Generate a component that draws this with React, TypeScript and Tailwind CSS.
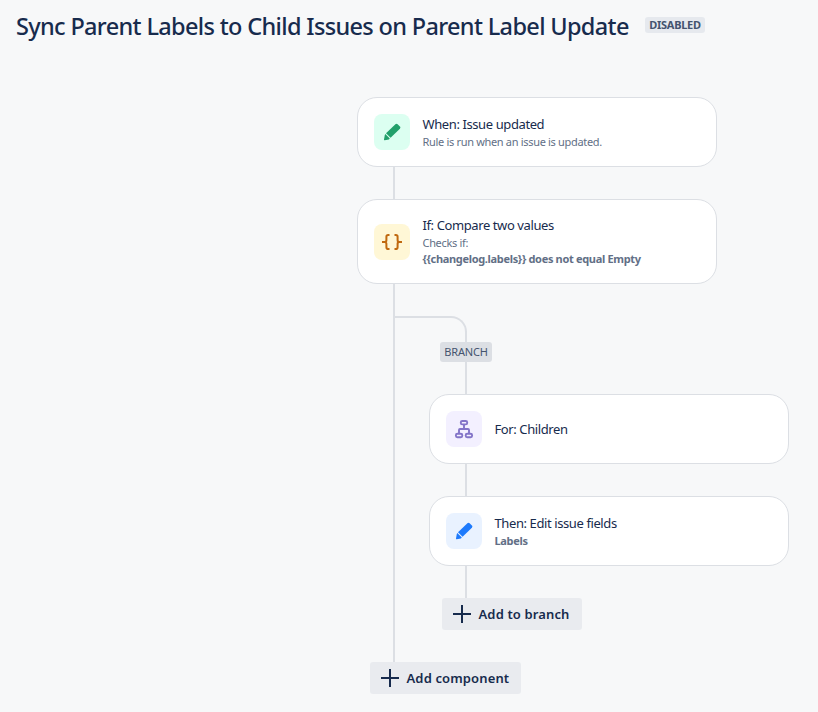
import type { ReactNode } from 'react';

const PencilIcon = () => (
  <svg width="24" height="24" viewBox="0 0 24 24" fill="currentColor">
    <path d="M15.400 4.200a1.600 1.600 0 0 1 2.200 0l2.300 2.300a1.600 1.600 0 0 1 0 2.200L10.600 17.800 6 13.200z" />
    <path d="M5.300 14.100l4.500 4.500-.9.800-4.200.9a.6.6 0 0 1-.7-.7l.8-4.700z" />
  </svg>
);

const BracesIcon = () => (
  <svg width="24" height="24" viewBox="0 0 24 24" fill="none" stroke="currentColor" strokeWidth="2">
    <path d="M9.500 5H8.200A1.800 1.800 0 0 0 6.400 6.800v3.400A1.800 1.800 0 0 1 4.600 12H2h2.600a1.800 1.800 0 0 1 1.800 1.800v3.400A1.800 1.800 0 0 0 8.200 19H9.500" />
    <path d="M14.500 5h1.300a1.800 1.800 0 0 1 1.800 1.800v3.400a1.800 1.800 0 0 0 1.800 1.800H22h-2.600a1.800 1.800 0 0 0-1.800 1.800v3.400a1.800 1.800 0 0 1-1.800 1.800H14.500" />
  </svg>
);

const TreeIcon = () => (
  <svg width="24" height="24" viewBox="0 0 24 24" fill="none" stroke="currentColor" strokeWidth="1.900">
    <rect x="8.800" y="4" width="6.400" height="3.400" rx="1.500" />
    <rect x="3.900" y="16.800" width="6.400" height="3.400" rx="1.500" />
    <rect x="13.700" y="16.800" width="6.400" height="3.400" rx="1.500" />
    <path d="M12 7.500V12M7 16.500V13a1 1 0 0 1 1-1h8a1 1 0 0 1 1 1v3.500" />
  </svg>
);

const PlusIcon = () => (
  <svg width="18" height="18" viewBox="0 0 18 18" stroke="currentColor" strokeWidth="2">
    <path d="M9 0v18M0 9h18" />
  </svg>
);

interface RuleCardProps {
  icon: ReactNode;
  iconClass: string;
  title: string;
  height?: string;
  children?: ReactNode;
}

function RuleCard({ icon, iconClass, title, height = 'h-[70px]', children }: RuleCardProps) {
  return (
    <div className={`flex w-[360px] items-center rounded-[20px] border border-[#dcdfe4] bg-white px-4 ${height}`}>
      <div className={`flex size-9 shrink-0 items-center justify-center rounded-lg ${iconClass}`}>{icon}</div>
      <div className="ml-[12.5px] whitespace-nowrap text-[11px] leading-4 tracking-[-0.32px] text-[#626f86]">
        <div className="text-[13px] leading-5 tracking-[-0.4px] text-[#172b4d]">{title}</div>
        {children}
      </div>
    </div>
  );
}

const Rail = () => <div className="ml-9 h-8 w-0.5 bg-[#dcdfe4]" />;

function AddButton({ className, children }: { className: string; children: ReactNode }) {
  return (
    <button
      className={`flex h-8 items-center gap-[7.5px] whitespace-nowrap rounded-[3px] bg-[#e9ebef] pl-[11px] text-[13px] font-semibold tracking-[0.13px] text-[#172b4d] ${className}`}
    >
      <PlusIcon />
      <span className="pt-0.5">{children}</span>
    </button>
  );
}

export default function App() {
  return (
    <div className="h-[712px] w-[818px] overflow-hidden bg-[#f7f8f9] font-['Noto_Sans',sans-serif]">
      <header className="flex h-[97px] items-start pl-4">
        <h1 className="w-[629px] whitespace-nowrap pt-2.5 text-[23.5px] font-medium leading-8 tracking-[-0.66px] text-[#172b4d]">
          Sync Parent Labels to Child Issues on Parent Label Update
        </h1>
        <span className="mt-[17px] flex h-4 w-[60px] items-center justify-center rounded-[3px] bg-[#e6e9ee] text-[11px] font-bold tracking-[-0.25px] text-[#44546f]">
          DISABLED
        </span>
      </header>

      <main className="ml-[357px]">
        <RuleCard icon={<PencilIcon />} iconClass="bg-[#dcfff1] text-[#22a06b]" title="When: Issue updated">
          <div>Rule is run when an issue is updated.</div>
        </RuleCard>
        <Rail />
        <RuleCard
          icon={<BracesIcon />}
          iconClass="bg-[#fff7d6] text-[#c0690f]"
          title="If: Compare two values"
          height="h-[85px]"
        >
          <div>Checks if:</div>
          <div className="pb-px font-bold">{'{{changelog.labels}} does not equal Empty'}</div>
        </RuleCard>

        {/* main rail runs beside the whole branch */}
        <div className="flex h-[378px]">
          <div className="ml-9 w-0.5 shrink-0 bg-[#dcdfe4]" />
          <div className="pt-8">
            <div className="h-[26px] w-[72px] rounded-tr-[16px] border-r-2 border-t-2 border-[#dcdfe4]" />
            <div className="ml-[45px] flex h-5 w-[52px] items-center justify-center rounded-[3px] bg-[#dcdfe4] text-[11px] tracking-[-0.2px] text-[#44546f]">
              BRANCH
            </div>
            <div className="ml-[34px]">
              <Rail />
              <RuleCard icon={<TreeIcon />} iconClass="bg-[#f3f0ff] text-[#8374c8]" title="For: Children" />
              <Rail />
              <RuleCard icon={<PencilIcon />} iconClass="bg-[#e9f2ff] text-[#1d7afc]" title="Then: Edit issue fields">
                <div className="font-bold">Labels</div>
              </RuleCard>
              <Rail />
              <AddButton className="ml-[13px] w-[140px]">Add to branch</AddButton>
            </div>
          </div>
        </div>
        <AddButton className="ml-[13px] w-[151px]">Add component</AddButton>
      </main>
    </div>
  );
}
